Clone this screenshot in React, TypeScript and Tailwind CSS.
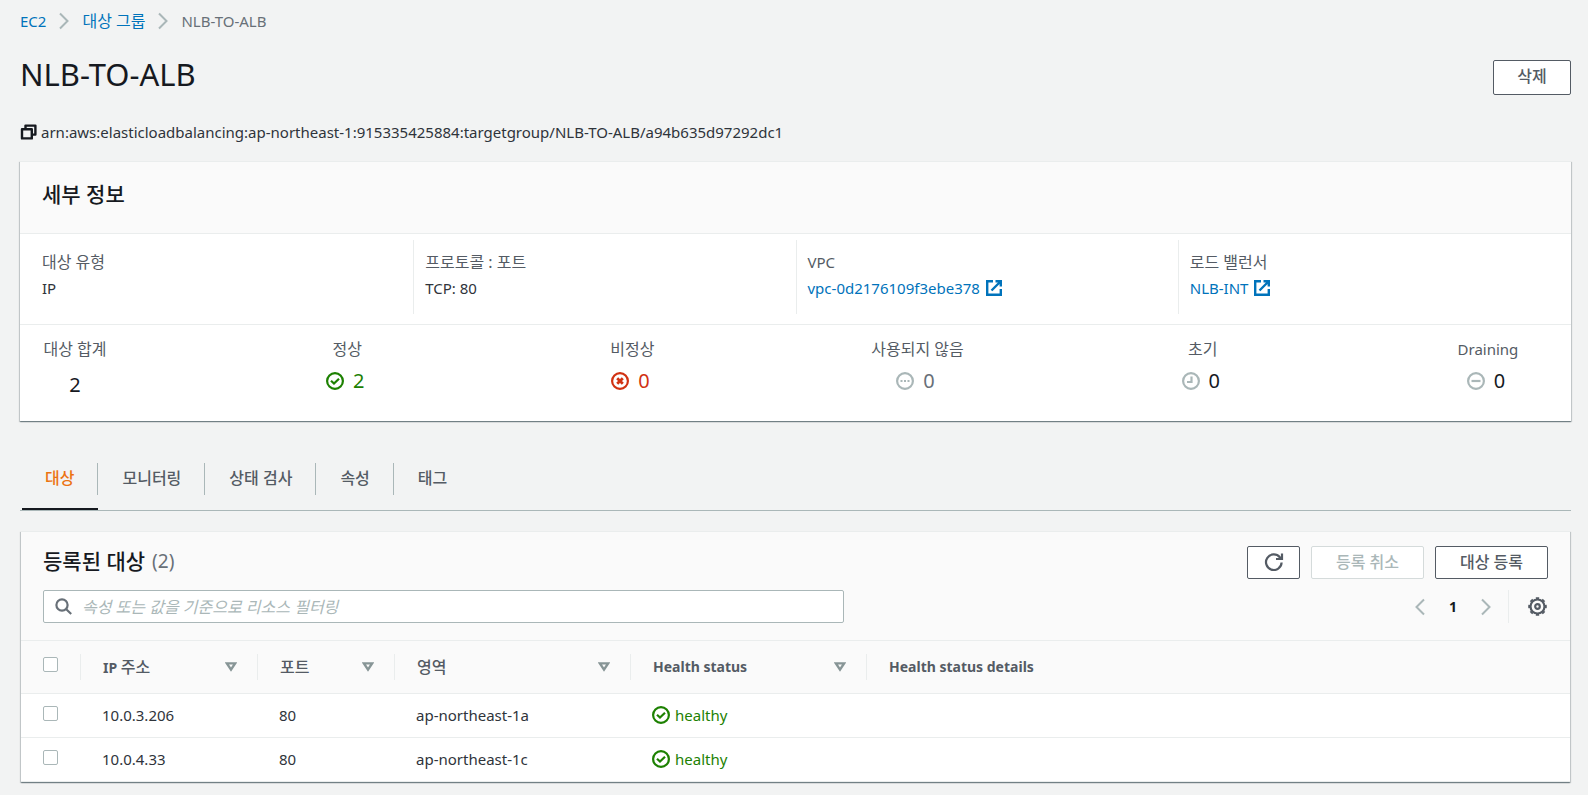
import type { ReactNode } from "react";

const ko = "text-base leading-6";

function Chevron({ left = false }: { left?: boolean }) {
  return (
    <svg width="12" height="18" viewBox="0 0 12 18" fill="none" stroke="#aab7b8" strokeWidth="2" aria-hidden="true">
      <path d={left ? "M10 1.5 2.5 9 10 16.5" : "M2 1.5 9.5 9 2 16.5"} />
    </svg>
  );
}

function CircleIcon({ className, children }: { className: string; children: ReactNode }) {
  return (
    <svg width="18" height="18" viewBox="0 0 18 18" fill="none" stroke="currentColor" strokeWidth="2.2" className={"shrink-0 " + className} aria-hidden="true">
      <circle cx="9" cy="9" r="7.9" />
      {children}
    </svg>
  );
}

const check = <path d="M5 8.8 8 11.6 13 6.8" />;

function External() {
  return (
    <svg width="16" height="16" viewBox="0 0 16 16" fill="none" stroke="currentColor" strokeWidth="2.4" aria-hidden="true">
      <path d="M7 1.200H1.200v13.600h13.600V9M9.500 1.200h5.300v5.300M14.500 1.500 5.500 10.500" />
    </svg>
  );
}

function SortIcon() {
  return (
    <svg width="12" height="10" viewBox="0 0 12 10" fill="none" stroke="#879596" strokeWidth="2.4" aria-hidden="true">
      <path d="M1.900 1.400h8.200L6 7.600z" />
    </svg>
  );
}

const details: { label: string; korean: boolean; value: string; link?: boolean }[] = [
  { label: "대상 유형", korean: true, value: "IP" },
  { label: "프로토콜 : 포트", korean: true, value: "TCP: 80" },
  { label: "VPC", korean: false, value: "vpc-0d2176109f3ebe378", link: true },
  { label: "로드 밸런서", korean: true, value: "NLB-INT", link: true },
];

const stats: { label: string; korean: boolean; count: number; color: string; icon: ReactNode }[] = [
  { label: "정상", korean: true, count: 2, color: "text-[#1d8102]", icon: <CircleIcon className="text-[#1d8102]">{check}</CircleIcon> },
  {
    label: "비정상", korean: true, count: 0, color: "text-[#d13212]",
    icon: <CircleIcon className="text-[#d13212]"><path d="M6.200 6.200l5.600 5.600M11.800 6.200l-5.600 5.600" strokeWidth="2.800" /></CircleIcon>,
  },
  {
    label: "사용되지 않음", korean: true, count: 0, color: "text-[#687078]",
    icon: <CircleIcon className="text-[#aab7b8]"><path d="M4.500 9h2M8 9h2M11.500 9h2" /></CircleIcon>,
  },
  {
    label: "초기", korean: true, count: 0, color: "text-[#16191f]",
    icon: <CircleIcon className="text-[#aab7b8]"><path d="M9.500 4.500V10H5" /></CircleIcon>,
  },
  {
    label: "Draining", korean: false, count: 0, color: "text-[#16191f]",
    icon: <CircleIcon className="text-[#aab7b8]"><path d="M4.500 9h9" /></CircleIcon>,
  },
];

const tabs = ["대상", "모니터링", "상태 검사", "속성", "태그"];

const columns = [
  { label: "IP 주소", sortable: true },
  { label: "포트", sortable: true },
  { label: "영역", sortable: true },
  { label: "Health status", sortable: true },
  { label: "Health status details", sortable: false },
];

const targets = [
  { ip: "10.0.3.206", port: 80, zone: "ap-northeast-1a", status: "healthy" },
  { ip: "10.0.4.33", port: 80, zone: "ap-northeast-1c", status: "healthy" },
];

const panel = "border-t border-[#eaeded] bg-white shadow-[0_1px_1px_0_rgba(0,28,36,0.35),1px_1px_1px_0_rgba(0,28,36,0.15),-1px_1px_1px_0_rgba(0,28,36,0.15)]";
const checkbox = "block size-[15px] appearance-none rounded-xs border border-[#aab7b8] bg-white checked:bg-[#0073bb]";
const button = "flex items-center justify-center rounded-xs border bg-white pb-0.5 text-base font-medium";

export default function App() {
  return (
    <main className="min-h-screen bg-[#f2f3f3] pr-[17px] pb-3 pl-5 font-['Noto_Sans','Noto_Sans_CJK_KR',sans-serif] text-[15px] leading-6 text-[#16191f]">
      <nav aria-label="breadcrumb" className="flex h-11 items-center gap-3 pb-0.5">
        <a href="#ec2" className="text-[#0073bb]">EC2</a>
        <Chevron />
        <a href="#groups" className={"text-[#0073bb] " + ko}>대상 그룹</a>
        <Chevron />
        <span className="text-[#687078]">NLB-TO-ALB</span>
      </nav>

      <header className="flex h-[66px] items-center justify-between">
        <h1 className="pb-1.5 text-[31px] leading-9">NLB-TO-ALB</h1>
        <button type="button" className={button + " h-[35px] w-[78px] border-[#545b64] text-[#545b64]"}>삭제</button>
      </header>

      <div className="flex h-[51px] items-center gap-1 pb-2">
        <button type="button" aria-label="ARN 복사">
          <svg width="17" height="16" viewBox="0 0 17 16" fill="none" stroke="#16191f" strokeWidth="2.4" aria-hidden="true">
            <path d="M2 5.200h9.800v9.200H2zM5.500 5V1.600H15.400v9h-3.400" strokeLinejoin="round" />
          </svg>
        </button>
        <span className="text-[#2f343b]">arn:aws:elasticloadbalancing:ap-northeast-1:915335425884:targetgroup/NLB-TO-ALB/a94b635d97292dc1</span>
      </div>

      <section className={panel}>
        <div className="flex h-[72px] items-center border-b border-[#eaeded] bg-[#fafafa] px-[22px] pb-2">
          <h2 className="text-[21px] font-medium">세부 정보</h2>
        </div>
        <dl className="grid h-[91px] grid-cols-4 border-b border-[#eaeded] px-[11px] pt-1.5 pb-2.5">
          {details.map((item, i) => (
            <div key={item.label} className={"pt-2.5 pr-3 pl-[11px] " + (i > 0 ? "border-l border-[#eaeded]" : "")}>
              <dt className={"h-[26px] text-[#545b64] " + (item.korean ? ko : "")}>{item.label}</dt>
              <dd className="text-[#2f343b]">
                {item.link ? (
                  <a href="#detail" className="flex items-center gap-1.5 text-[#0073bb]">{item.value}<External /></a>
                ) : item.value}
              </dd>
            </div>
          ))}
        </dl>
        <dl className="flex h-[96px] justify-between pt-3 pr-[37px] pl-[22px] whitespace-nowrap">
          <div className="flex w-[66px] flex-col items-center">
            <dt className={"text-[#545b64] " + ko}>대상 합계</dt>
            <dd className="mt-3 text-xl leading-6">2</dd>
          </div>
          {stats.map((s) => (
            <div key={s.label} className="flex w-[92px] flex-col items-center">
              <dt className={"text-[#545b64] " + (s.korean ? ko : "")}>{s.label}</dt>
              <dd className={"mt-2 flex items-center gap-[9px] pr-1 text-xl leading-6 " + s.color}>{s.icon}{s.count}</dd>
            </div>
          ))}
        </dl>
      </section>

      <div role="tablist" className="mt-9 flex h-[54px] gap-px border-b border-[#aab7b8] pl-0.5">
        {tabs.map((t, i) => (
          <button
            key={t}
            type="button"
            role="tab"
            aria-selected={i === 0}
            className={"flex items-center border-b-2 pb-2 text-base font-medium " + (i === 0 ? "border-[#16191f] text-[#ec7211]" : "border-transparent text-[#545b64]")}
          >
            <span className={"flex h-8 items-center px-[23px] pb-0.5 " + (i < tabs.length - 1 ? "border-r border-[#aab7b8]" : "")}>{t}</span>
          </button>
        ))}
      </div>

      <section className={"mx-px mt-5 " + panel}>
        <div className="bg-[#fafafa] px-[22px] pt-3.5 pb-[17px]">
          <div className="flex items-center justify-between">
            <h2 className="flex items-center gap-[7px] pb-1 text-[21px] font-medium">
              등록된 대상 <span className="text-[19px] font-normal text-[#687078]">(2)</span>
            </h2>
            <div className="flex gap-[11px]">
              <button type="button" aria-label="새로 고침" className={button + " h-[33px] w-[53px] border-[#545b64] text-[#545b64]"}>
                <svg width="20" height="18" viewBox="0 0 20 18" fill="none" stroke="currentColor" strokeWidth="2.2" aria-hidden="true">
                  <path d="M17.600 9.500A7.800 7.800 0 1 1 15.800 4.200L17.500 6M18 .5V6h-6" />
                </svg>
              </button>
              <button type="button" disabled className={button + " h-[33px] w-[113px] border-[#d5dbdb] text-[#aab7b8]"}>등록 취소</button>
              <button type="button" className={button + " h-[33px] w-[113px] border-[#545b64] text-[#545b64]"}>대상 등록</button>
            </div>
          </div>
          <div className="mt-[11px] flex items-center justify-between">
            <label className="flex h-[33px] max-w-[801px] flex-1 items-center gap-2.5 rounded-xs border border-[#aab7b8] bg-white px-[11px]">
              <svg width="17" height="17" viewBox="0 0 17 17" fill="none" stroke="#687078" strokeWidth="2.200" aria-hidden="true">
                <circle cx="7" cy="7" r="5.600" />
                <path d="m11 11 5.200 5" />
              </svg>
              <input
                type="search"
                aria-label="리소스 필터링"
                placeholder="속성 또는 값을 기준으로 리소스 필터링"
                className="h-full flex-1 bg-transparent text-base outline-none placeholder:text-[#aab7b8] placeholder:italic"
              />
            </label>
            <div className="flex h-[33px] items-center">
              <button type="button" aria-label="이전 페이지"><Chevron left /></button>
              <button type="button" aria-current="page" className="w-[54px] text-sm font-bold">1</button>
              <button type="button" aria-label="다음 페이지"><Chevron /></button>
              <button type="button" aria-label="설정" className="ml-4 flex h-full items-center border-l border-[#eaeded] pr-px pl-[19px] text-[#545b64]">
                <svg width="19" height="19" viewBox="0 0 19 19" fill="none" stroke="currentColor" aria-hidden="true">
                  <circle cx="9.5" cy="9.5" r="7" strokeWidth="2.2" />
                  <circle cx="9.5" cy="9.5" r="8.4" strokeWidth="1.8" pathLength="64" strokeDasharray="4 4" strokeDashoffset="2" />
                  <circle cx="9.5" cy="9.5" r="2.3" strokeWidth="2.2" />
                </svg>
              </button>
            </div>
          </div>
        </div>
        <table className="w-full table-fixed border-collapse text-left">
          <colgroup>
            <col className="w-[59px]" />
            <col className="w-[177px]" />
            <col className="w-[137px]" />
            <col className="w-[236px]" />
            <col className="w-[236px]" />
            <col />
          </colgroup>
          <thead>
            <tr className="h-[53px] border-y border-[#eaeded] bg-[#fafafa] text-[#545b64]">
              <th className="pb-1.5 pl-[22px]"><input type="checkbox" aria-label="모두 선택" className={checkbox} /></th>
              {columns.map((c) => (
                <th key={c.label} className="p-0 font-bold">
                  <div className="flex h-[26px] items-center justify-between border-l border-[#eaeded] pr-5 pl-[22px] text-sm">
                    {c.label === "IP 주소" ? (
                      <span>IP <span className={ko + " font-medium"}>주소</span></span>
                    ) : c.label.startsWith("Health") ? c.label : (
                      <span className={ko + " font-medium"}>{c.label}</span>
                    )}
                    {c.sortable && <SortIcon />}
                  </div>
                </th>
              ))}
            </tr>
          </thead>
          <tbody>
            {targets.map((t) => (
              <tr key={t.ip} className="h-11 border-b border-[#eaeded] text-[#2f343b]">
                <td className="pb-1 pl-[22px]"><input type="checkbox" aria-label={t.ip} className={checkbox} /></td>
                <td className="pb-0.5 pl-[22px]">{t.ip}</td>
                <td className="pb-0.5 pl-[22px]">{t.port}</td>
                <td className="pb-0.5 pl-[22px]">{t.zone}</td>
                <td className="pb-0.5 pl-[22px]">
                  <span className="flex items-center gap-[5px] text-[#1d8102]">
                    <CircleIcon className="text-[#1d8102]">{check}</CircleIcon>
                    {t.status}
                  </span>
                </td>
                <td />
              </tr>
            ))}
          </tbody>
        </table>
      </section>
    </main>
  );
}
